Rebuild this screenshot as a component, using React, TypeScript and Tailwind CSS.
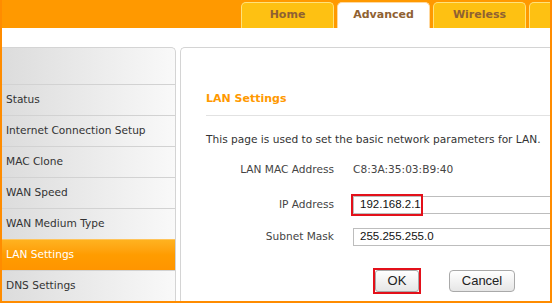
const tabs = [
  { label: "Home", active: false },
  { label: "Advanced", active: true },
  { label: "Wireless", active: false },
  { label: "", active: false },
];

const menu = [
  "Status",
  "Internet Connection Setup",
  "MAC Clone",
  "WAN Speed",
  "WAN Medium Type",
  "LAN Settings",
  "DNS Settings",
];

export default function App() {
  return (
    <div className="flex h-[303px] w-[552px] flex-col overflow-hidden border-x-2 border-b-2 border-[#ff8c00] bg-white font-['DejaVu_Sans',sans-serif]">
      <header className="flex h-[28px] shrink-0 items-end gap-[3px] bg-[#ff9900] pl-[239px]">
        {tabs.map((t, i) => (
          <div
            key={i}
            className={
              t.active
                ? "flex h-[26px] w-[93px] shrink-0 items-center justify-center rounded-t-[5px] border border-b-0 border-[#ffd9a0] bg-white text-[11px] font-bold text-[#8f6132]"
                : "flex h-[26px] w-[93px] shrink-0 items-center justify-center rounded-t-[5px] border border-b-0 border-[#ffe27a] bg-[#fec112] text-[11px] font-bold text-[#8f6132]"
            }
          >
            {t.label}
          </div>
        ))}
      </header>

      <div className="h-[19px] shrink-0" />

      <div className="flex min-h-0 flex-1 gap-[4px]">
        <aside className="w-[174px] shrink-0 rounded-tr-[5px] border-t border-r border-[#d4d4d4] bg-gradient-to-r from-[#dcdcdc] to-[#f9f9f9]">
          <div className="h-[36px]" />
          {menu.map((m) =>
            m === "LAN Settings" ? (
              <div
                key={m}
                className="flex h-[31px] items-center border-t border-[#ffc45a] bg-gradient-to-b from-[#ffb21f] via-[#ff9c00] to-[#ff9500] pl-[4px] text-[10.6px] text-white"
              >
                {m}
              </div>
            ) : (
              <div
                key={m}
                className="flex h-[31px] items-center border-t border-[#d2d2d2] pl-[4px] text-[10.6px] text-[#333]"
              >
                {m}
              </div>
            )
          )}
        </aside>

        <main className="min-w-0 flex-1 rounded-tl-[5px] border-t border-l border-[#d4d4d4] pl-[25px]">
          <h1 className="mt-[43px] h-[16px] text-[11px] leading-[16px] font-bold text-[#ff9900]">
            LAN Settings
          </h1>
          <div className="mt-[8px] border-t border-[#e2e2e2]" />
          <p className="mt-[15px] h-[16px] text-[10.6px] leading-[16px] whitespace-nowrap text-[#333]">
            This page is used to set the basic network parameters for LAN.
          </p>

          <div className="mt-[14px] flex h-[18px] items-center text-[10.6px] text-[#444]">
            <span className="w-[128px] shrink-0 text-right">LAN MAC Address</span>
            <span className="ml-[19px] whitespace-nowrap">C8:3A:35:03:B9:40</span>
          </div>

          <div className="mt-[17px] flex h-[18px] items-center text-[10.6px] text-[#444]">
            <span className="w-[128px] shrink-0 text-right">IP Address</span>
            <div className="relative ml-[19px] shrink-0">
              <div className="flex h-[18px] w-[230px] items-center border border-[#bdbdbd] pl-[6px] font-['Liberation_Sans',sans-serif] text-[11.5px] text-[#111]">
                192.168.2.1
              </div>
              <div className="absolute top-[-2px] left-[-2px] h-[22px] w-[72px] border-2 border-[#e3101a]" />
            </div>
          </div>

          <div className="mt-[14px] flex h-[18px] items-center text-[10.6px] text-[#444]">
            <span className="w-[128px] shrink-0 text-right">Subnet Mask</span>
            <div className="ml-[19px] flex h-[18px] w-[230px] shrink-0 items-center border border-[#bdbdbd] pl-[6px] font-['Liberation_Sans',sans-serif] text-[11.5px] text-[#111]">
              255.255.255.0
            </div>
          </div>

          <div className="mt-[22px] flex items-center gap-[28px] pl-[167px] font-['Liberation_Sans',sans-serif] text-[13px] text-[#222]">
            <div className="border-2 border-[#e3101a]">
              <button className="block h-[22px] w-[44px] rounded-[3px] border border-[#a9a9a9] bg-gradient-to-b from-white to-[#e6e6e6]">
                OK
              </button>
            </div>
            <button className="h-[22px] w-[66px] rounded-[4px] border border-[#a9a9a9] bg-gradient-to-b from-white to-[#e6e6e6]">
              Cancel
            </button>
          </div>
        </main>
      </div>
    </div>
  );
}
